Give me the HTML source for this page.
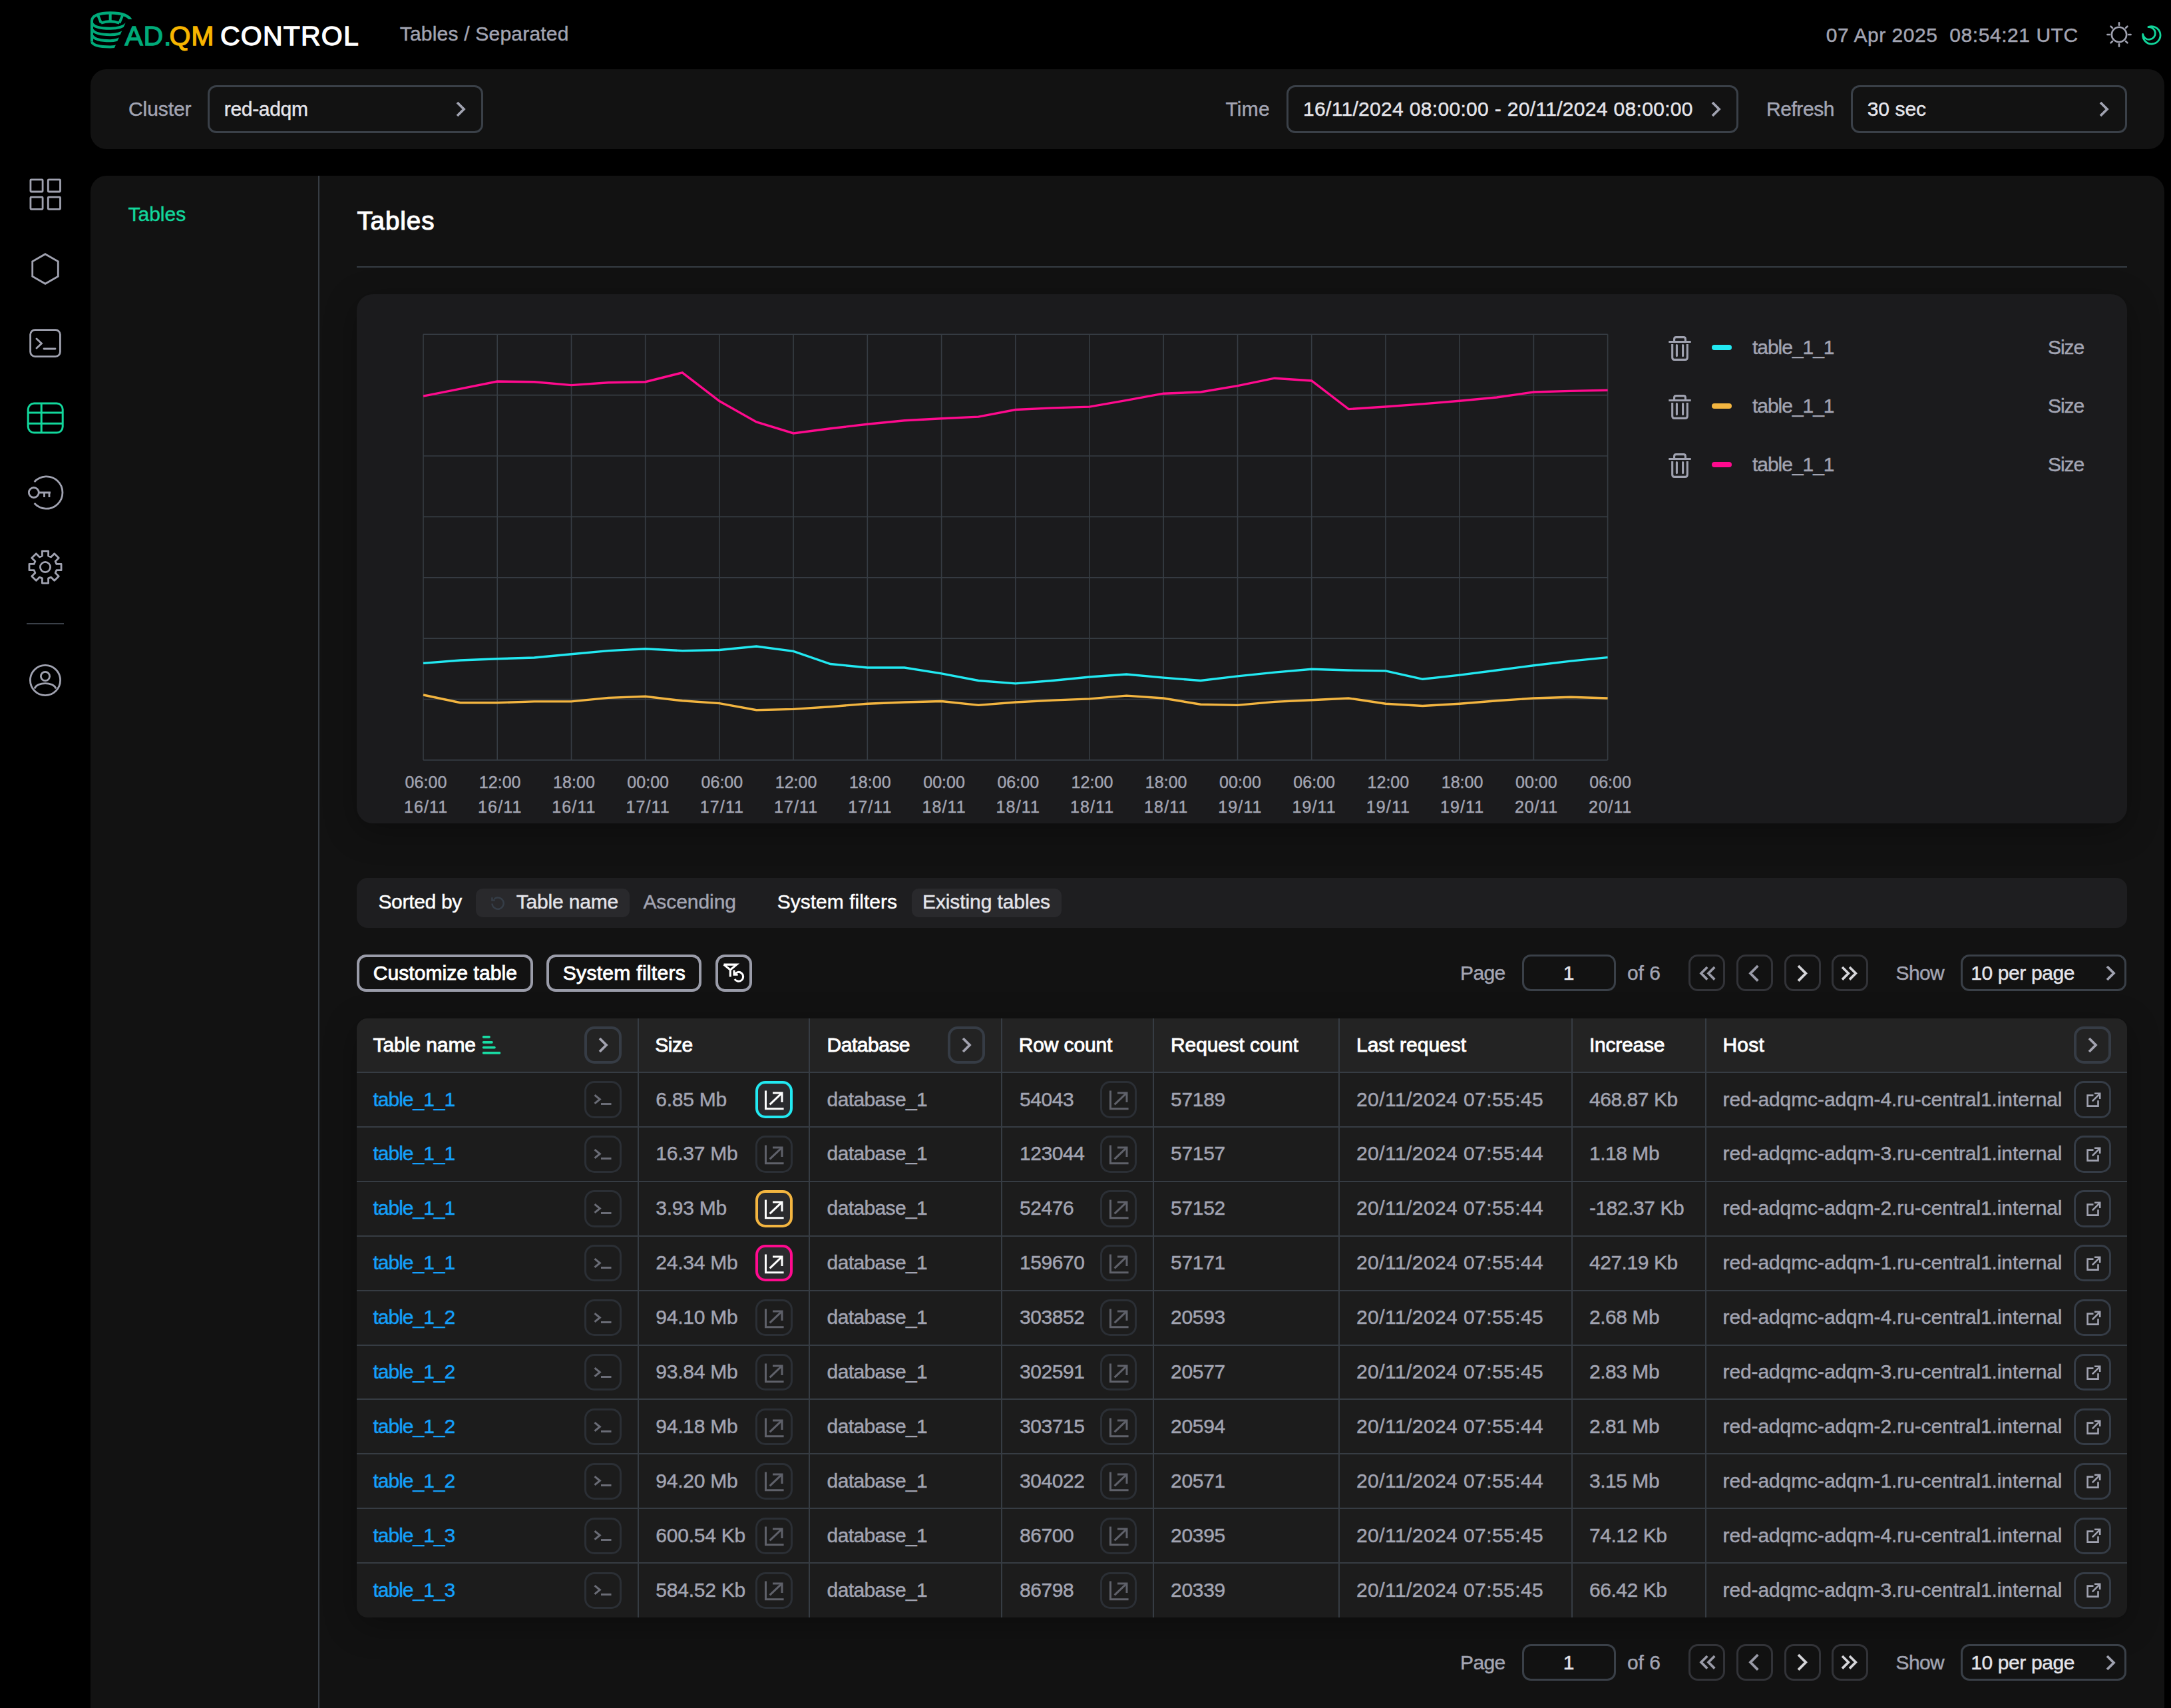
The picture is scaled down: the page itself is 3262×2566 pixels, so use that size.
<!DOCTYPE html>
<html><head><meta charset="utf-8"><title>ADQM Control - Tables</title>
<style>
html,body{margin:0;padding:0;background:#000000;}
body{width:3262px;height:2566px;position:relative;overflow:hidden;font-family:"Liberation Sans",sans-serif;}
.a{position:absolute;}
.t{position:absolute;white-space:nowrap;line-height:1;}
svg.a{overflow:visible;}
</style></head><body>
<svg class="a" style="left:130.0px;top:10.0px" width="80" height="70" viewBox="0 0 1952 1708"><defs><clipPath id="lgc"><polygon points="0,0 1952,0 1952,462 1486,462 1403,650 1065,1415 995,1575 995,1708 0,1708"/></clipPath></defs>
<g fill="none" stroke="#00ab7a" stroke-width="100" stroke-linecap="butt" clip-path="url(#lgc)">
<path d="M1640 520 C1560 320 1250 228 870 228 C470 228 195 330 195 520 L195 1290"/>
<path d="M425 330 L535 600 M1315 330 L1205 600 M870 230 L870 520"/>
<path d="M535 600 Q870 480 1205 600"/>
<path d="M195 600 Q280 795 870 800 Q1300 800 1500 600"/>
<path d="M215 850 Q320 1030 870 1030 Q1210 1030 1400 880"/>
<path d="M215 1070 Q320 1250 870 1250 Q1110 1250 1300 1130"/>
<path d="M195 1290 Q250 1470 870 1475 Q1010 1475 1200 1420"/>
</g></svg>
<div class="t" style="left:187.5px;top:33.8px;font-size:41px;color:#00ab7a;-webkit-text-stroke:0.45px #00ab7a;letter-spacing:0.72px;-webkit-text-stroke:1.3px #00ab7a;">AD.</div>
<div class="t" style="left:254.5px;top:33.8px;font-size:41px;color:#f7b500;-webkit-text-stroke:0.45px #f7b500;letter-spacing:0.98px;-webkit-text-stroke:1.3px #f7b500;">QM</div>
<div class="t" style="left:331.0px;top:33.8px;font-size:41px;color:#ffffff;-webkit-text-stroke:0.45px #ffffff;letter-spacing:1.22px;-webkit-text-stroke:1.3px #ffffff;">CONTROL</div>
<div class="t" style="left:600.7px;top:36.1px;font-size:30px;color:#a2a4b2;-webkit-text-stroke:0.45px #a2a4b2;letter-spacing:0.21px;">Tables / Separated</div>
<div class="t" style="left:2743.7px;top:37.6px;font-size:30px;color:#a2a4b2;-webkit-text-stroke:0.45px #a2a4b2;letter-spacing:0.55px;">07 Apr 2025 &nbsp;08:54:21 UTC</div>
<svg class="a" style="left:3164.0px;top:32.0px" width="40" height="40" viewBox="0 0 40 40"><g fill="none" stroke="#a0a2b0" stroke-width="2.6" stroke-linecap="round"><circle cx="20" cy="20" r="11.2"/><line x1="34.20" y1="20.00" x2="37.60" y2="20.00"/><line x1="30.04" y1="30.04" x2="32.45" y2="32.45"/><line x1="20.00" y1="34.20" x2="20.00" y2="37.60"/><line x1="9.96" y1="30.04" x2="7.55" y2="32.45"/><line x1="5.80" y1="20.00" x2="2.40" y2="20.00"/><line x1="9.96" y1="9.96" x2="7.55" y2="7.55"/><line x1="20.00" y1="5.80" x2="20.00" y2="2.40"/><line x1="30.04" y1="9.96" x2="32.45" y2="7.55"/></g></svg>
<svg class="a" style="left:3213.0px;top:34.0px" width="40" height="40" viewBox="0 0 40 40"><path fill="none" stroke="#12d79c" stroke-width="2.8" stroke-linejoin="round"
 d="M14.9 6.6 A13.2 13.2 0 1 1 6.7 17.5 A9.4 9.4 0 1 0 14.9 6.6 Z"/></svg>
<div class="a" style="left:136.0px;top:104.0px;width:3116.0px;height:120.0px;background:#121212;border-radius:24px;"></div>
<div class="t" style="left:193.0px;top:149.2px;font-size:30px;color:#a2a4b2;-webkit-text-stroke:0.45px #a2a4b2;letter-spacing:-0.08px;">Cluster</div>
<div class="a" style="left:312.0px;top:128.3px;width:414.4px;height:71.4px;border-radius:13px;border:3px solid #3a4048;box-sizing:border-box;"></div>
<div class="t" style="left:336.7px;top:149.2px;font-size:30px;color:#e4e4ea;-webkit-text-stroke:0.45px #e4e4ea;letter-spacing:-0.30px;">red-adqm</div>
<svg class="a" style="left:680.6px;top:148.0px" width="22" height="32" viewBox="0 0 22 32"><path d="M6.00 6.00 L16.00 16.00 L6.00 26.00" fill="none" stroke="#a0a2b0" stroke-width="3.8" stroke-linecap="butt" stroke-linejoin="miter"/></svg>
<div class="t" style="left:1841.4px;top:149.2px;font-size:30px;color:#a2a4b2;-webkit-text-stroke:0.45px #a2a4b2;letter-spacing:0.26px;">Time</div>
<div class="a" style="left:1933.0px;top:128.3px;width:679.0px;height:71.4px;border-radius:13px;border:3px solid #3a4048;box-sizing:border-box;"></div>
<div class="t" style="left:1958.0px;top:149.2px;font-size:30px;color:#e4e4ea;-webkit-text-stroke:0.45px #e4e4ea;letter-spacing:0.32px;">16/11/2024 08:00:00 - 20/11/2024 08:00:00</div>
<svg class="a" style="left:2567.0px;top:148.0px" width="22" height="32" viewBox="0 0 22 32"><path d="M6.00 6.00 L16.00 16.00 L6.00 26.00" fill="none" stroke="#a0a2b0" stroke-width="3.8" stroke-linecap="butt" stroke-linejoin="miter"/></svg>
<div class="t" style="left:2654.0px;top:149.2px;font-size:30px;color:#a2a4b2;-webkit-text-stroke:0.45px #a2a4b2;letter-spacing:-0.44px;">Refresh</div>
<div class="a" style="left:2781.0px;top:128.3px;width:414.7px;height:71.4px;border-radius:13px;border:3px solid #3a4048;box-sizing:border-box;"></div>
<div class="t" style="left:2805.7px;top:149.2px;font-size:30px;color:#e4e4ea;-webkit-text-stroke:0.45px #e4e4ea;">30 sec</div>
<svg class="a" style="left:3150.0px;top:148.0px" width="22" height="32" viewBox="0 0 22 32"><path d="M6.00 6.00 L16.00 16.00 L6.00 26.00" fill="none" stroke="#a0a2b0" stroke-width="3.8" stroke-linecap="butt" stroke-linejoin="miter"/></svg>
<svg class="a" style="left:40.0px;top:264.0px" width="56" height="56" viewBox="0 0 56 56"><g fill="none" stroke="#a0a2b0" stroke-width="2.8"><rect x="5.9" y="5.8" width="18.2" height="18.2" rx="1"/><rect x="32.3" y="5.8" width="18.2" height="18.2" rx="1"/><rect x="5.9" y="32.1" width="18.2" height="18.2" rx="1"/><rect x="32.3" y="32.1" width="18.2" height="18.2" rx="1"/></g></svg>
<svg class="a" style="left:40.0px;top:376.0px" width="56" height="56" viewBox="0 0 56 56"><polygon fill="none" stroke="#a0a2b0" stroke-width="2.8" points="28.00,5.70 47.31,16.85 47.31,39.15 28.00,50.30 8.69,39.15 8.69,16.85"/></svg>
<svg class="a" style="left:40.0px;top:487.0px" width="56" height="56" viewBox="0 0 56 56"><g fill="none" stroke="#a0a2b0" stroke-width="2.8" stroke-linecap="round"><rect x="5.6" y="8.6" width="44.8" height="40" rx="7"/><path d="M15 22 L22.5 29 L15 36" /><path d="M26 37 L43 37"/></g></svg>
<svg class="a" style="left:36.0px;top:600.0px" width="64" height="56" viewBox="0 0 64 56"><g fill="none" stroke="#12d79c" stroke-width="3"><rect x="6.2" y="6.1" width="52" height="44" rx="9"/><path d="M26.2 6.1 L26.2 50.1 M6.2 20 L58.2 20 M6.2 36.2 L58.2 36.2"/></g></svg>
<svg class="a" style="left:36.0px;top:708.0px" width="64" height="64" viewBox="0 0 64 64"><g fill="none" stroke="#a0a2b0" stroke-width="2.8"><path d="M15.6 16 A24.2 24.2 0 1 1 15.6 48"/><circle cx="14.8" cy="32" r="7.5"/><path d="M22.3 32 L40 32 M30.5 32 L30.5 39 M38 32 L38 39"/></g></svg>
<svg class="a" style="left:36.0px;top:820.0px" width="64" height="64" viewBox="0 0 64 64"><g fill="none" stroke="#a0a2b0" stroke-width="2.8" stroke-linejoin="round"><path d="M48.90 27.47 L56.05 27.33 L56.05 36.67 L48.90 36.53 L47.16 40.75 L52.31 45.70 L45.70 52.31 L40.75 47.16 L36.53 48.90 L36.67 56.05 L27.33 56.05 L27.47 48.90 L23.25 47.16 L18.30 52.31 L11.69 45.70 L16.84 40.75 L15.10 36.53 L7.95 36.67 L7.95 27.33 L15.10 27.47 L16.84 23.25 L11.69 18.30 L18.30 11.69 L23.25 16.84 L27.47 15.10 L27.33 7.95 L36.67 7.95 L36.53 15.10 L40.75 16.84 L45.70 11.69 L52.31 18.30 L47.16 23.25 Z"/><circle cx="32" cy="32" r="7.6"/></g></svg>
<div class="a" style="left:40.0px;top:936.0px;width:56.0px;height:2.0px;background:#3a4048;"></div>
<svg class="a" style="left:36.0px;top:990.0px" width="64" height="64" viewBox="0 0 64 64"><g fill="none" stroke="#a0a2b0" stroke-width="2.8" stroke-width="3"><circle cx="32" cy="32" r="22.6"/><circle cx="32" cy="26" r="6.6"/><path d="M15.8 44.5 C20 34 44 34 48.2 44.5"/></g></svg>
<div class="a" style="left:136.0px;top:264.0px;width:3116.0px;height:2336.0px;background:#121212;border-radius:24px;"></div>
<div class="t" style="left:192.4px;top:306.8px;font-size:30px;color:#12d79c;-webkit-text-stroke:0.45px #12d79c;letter-spacing:0.03px;">Tables</div>
<div class="a" style="left:477.7px;top:264.0px;width:2.0px;height:2302.0px;background:#363c43;"></div>
<div class="t" style="left:536.4px;top:313.2px;font-size:38.5px;color:#ffffff;-webkit-text-stroke:1.16px #ffffff;letter-spacing:0.94px;">Tables</div>
<div class="a" style="left:536.0px;top:400.0px;width:2660.0px;height:2.0px;background:#363c43;"></div>
<div class="a" style="left:536.0px;top:442.0px;width:2660.0px;height:795.0px;background:#1b1b1d;border-radius:24px;box-shadow:0 12px 50px rgba(0,0,0,0.3);"></div>
<svg class="a" style="left:0.0px;top:0.0px" width="3262" height="1300" viewBox="0 0 3262 1300"><path d="M636.0 502.2 L636.0 1141.9 M747.2 502.2 L747.2 1141.9 M858.5 502.2 L858.5 1141.9 M969.7 502.2 L969.7 1141.9 M1080.9 502.2 L1080.9 1141.9 M1192.1 502.2 L1192.1 1141.9 M1303.3 502.2 L1303.3 1141.9 M1414.6 502.2 L1414.6 1141.9 M1525.8 502.2 L1525.8 1141.9 M1637.0 502.2 L1637.0 1141.9 M1748.2 502.2 L1748.2 1141.9 M1859.5 502.2 L1859.5 1141.9 M1970.7 502.2 L1970.7 1141.9 M2081.9 502.2 L2081.9 1141.9 M2193.1 502.2 L2193.1 1141.9 M2304.4 502.2 L2304.4 1141.9 M2415.6 502.2 L2415.6 1141.9 M636 502.2 L2415.6 502.2 M636 593.6 L2415.6 593.6 M636 685.0 L2415.6 685.0 M636 776.4 L2415.6 776.4 M636 867.7 L2415.6 867.7 M636 959.1 L2415.6 959.1 M636 1050.5 L2415.6 1050.5 M636 1141.9 L2415.6 1141.9" stroke="#363c43" stroke-width="1.6" fill="none"/><polyline points="636.0,1044.0 691.6,1055.7 747.2,1055.7 802.8,1053.9 858.5,1053.9 914.1,1048.4 969.7,1046.2 1025.3,1052.8 1080.9,1056.6 1136.5,1066.7 1192.1,1065.4 1247.7,1061.7 1303.3,1057.2 1359.0,1055.0 1414.6,1053.5 1470.2,1059.4 1525.8,1055.0 1581.4,1052.1 1637.0,1049.9 1692.6,1045.1 1748.2,1049.0 1803.9,1058.3 1859.5,1059.4 1915.1,1054.4 1970.7,1051.7 2026.3,1049.0 2081.9,1057.2 2137.5,1060.5 2193.1,1057.2 2248.8,1052.8 2304.4,1049.0 2360.0,1047.3 2415.6,1049.0" fill="none" stroke="#f3b540" stroke-width="3.4" stroke-linejoin="miter"/><polyline points="636.0,996.4 691.6,992.0 747.2,989.8 802.8,988.0 858.5,982.7 914.1,977.6 969.7,974.8 1025.3,977.6 1080.9,976.5 1136.5,971.0 1192.1,978.3 1247.7,997.5 1303.3,1003.0 1359.0,1003.0 1414.6,1011.9 1470.2,1022.5 1525.8,1026.9 1581.4,1022.5 1637.0,1017.0 1692.6,1013.0 1748.2,1018.1 1803.9,1022.5 1859.5,1015.9 1915.1,1010.1 1970.7,1005.3 2026.3,1007.0 2081.9,1007.9 2137.5,1020.3 2193.1,1014.1 2248.8,1007.0 2304.4,999.7 2360.0,993.1 2415.6,987.6" fill="none" stroke="#22e9f2" stroke-width="3.4" stroke-linejoin="miter"/><polyline points="636.0,595.2 691.6,584.1 747.2,573.0 802.8,573.7 858.5,578.6 914.1,574.8 969.7,573.7 1025.3,559.8 1080.9,602.6 1136.5,633.9 1192.1,650.9 1247.7,643.8 1303.3,637.2 1359.0,631.7 1414.6,628.8 1470.2,626.1 1525.8,615.5 1581.4,612.9 1637.0,611.1 1692.6,601.4 1748.2,591.2 1803.9,589.0 1859.5,579.7 1915.1,568.2 1970.7,572.0 2026.3,614.6 2081.9,611.0 2137.5,606.9 2193.1,602.2 2248.8,597.0 2304.4,589.0 2360.0,587.4 2415.6,586.3" fill="none" stroke="#ff0a8e" stroke-width="3.4" stroke-linejoin="miter"/></svg>
<div class="t" style="left:608.6px;top:1163.3px;font-size:25px;color:#a2a4b2;-webkit-text-stroke:0.45px #a2a4b2;letter-spacing:0.04px;">06:00</div>
<div class="t" style="left:606.9px;top:1199.8px;font-size:25px;color:#a2a4b2;-webkit-text-stroke:0.45px #a2a4b2;letter-spacing:1.12px;">16/11</div>
<div class="t" style="left:719.8px;top:1163.3px;font-size:25px;color:#a2a4b2;-webkit-text-stroke:0.45px #a2a4b2;letter-spacing:0.04px;">12:00</div>
<div class="t" style="left:718.1px;top:1199.8px;font-size:25px;color:#a2a4b2;-webkit-text-stroke:0.45px #a2a4b2;letter-spacing:1.12px;">16/11</div>
<div class="t" style="left:831.1px;top:1163.3px;font-size:25px;color:#a2a4b2;-webkit-text-stroke:0.45px #a2a4b2;letter-spacing:0.04px;">18:00</div>
<div class="t" style="left:829.3px;top:1199.8px;font-size:25px;color:#a2a4b2;-webkit-text-stroke:0.45px #a2a4b2;letter-spacing:1.12px;">16/11</div>
<div class="t" style="left:942.3px;top:1163.3px;font-size:25px;color:#a2a4b2;-webkit-text-stroke:0.45px #a2a4b2;letter-spacing:0.04px;">00:00</div>
<div class="t" style="left:940.5px;top:1199.8px;font-size:25px;color:#a2a4b2;-webkit-text-stroke:0.45px #a2a4b2;letter-spacing:1.12px;">17/11</div>
<div class="t" style="left:1053.5px;top:1163.3px;font-size:25px;color:#a2a4b2;-webkit-text-stroke:0.45px #a2a4b2;letter-spacing:0.04px;">06:00</div>
<div class="t" style="left:1051.8px;top:1199.8px;font-size:25px;color:#a2a4b2;-webkit-text-stroke:0.45px #a2a4b2;letter-spacing:1.12px;">17/11</div>
<div class="t" style="left:1164.7px;top:1163.3px;font-size:25px;color:#a2a4b2;-webkit-text-stroke:0.45px #a2a4b2;letter-spacing:0.04px;">12:00</div>
<div class="t" style="left:1163.0px;top:1199.8px;font-size:25px;color:#a2a4b2;-webkit-text-stroke:0.45px #a2a4b2;letter-spacing:1.12px;">17/11</div>
<div class="t" style="left:1275.9px;top:1163.3px;font-size:25px;color:#a2a4b2;-webkit-text-stroke:0.45px #a2a4b2;letter-spacing:0.04px;">18:00</div>
<div class="t" style="left:1274.2px;top:1199.8px;font-size:25px;color:#a2a4b2;-webkit-text-stroke:0.45px #a2a4b2;letter-spacing:1.12px;">17/11</div>
<div class="t" style="left:1387.2px;top:1163.3px;font-size:25px;color:#a2a4b2;-webkit-text-stroke:0.45px #a2a4b2;letter-spacing:0.04px;">00:00</div>
<div class="t" style="left:1385.4px;top:1199.8px;font-size:25px;color:#a2a4b2;-webkit-text-stroke:0.45px #a2a4b2;letter-spacing:1.12px;">18/11</div>
<div class="t" style="left:1498.4px;top:1163.3px;font-size:25px;color:#a2a4b2;-webkit-text-stroke:0.45px #a2a4b2;letter-spacing:0.04px;">06:00</div>
<div class="t" style="left:1496.6px;top:1199.8px;font-size:25px;color:#a2a4b2;-webkit-text-stroke:0.45px #a2a4b2;letter-spacing:1.12px;">18/11</div>
<div class="t" style="left:1609.6px;top:1163.3px;font-size:25px;color:#a2a4b2;-webkit-text-stroke:0.45px #a2a4b2;letter-spacing:0.04px;">12:00</div>
<div class="t" style="left:1607.9px;top:1199.8px;font-size:25px;color:#a2a4b2;-webkit-text-stroke:0.45px #a2a4b2;letter-spacing:1.12px;">18/11</div>
<div class="t" style="left:1720.8px;top:1163.3px;font-size:25px;color:#a2a4b2;-webkit-text-stroke:0.45px #a2a4b2;letter-spacing:0.04px;">18:00</div>
<div class="t" style="left:1719.1px;top:1199.8px;font-size:25px;color:#a2a4b2;-webkit-text-stroke:0.45px #a2a4b2;letter-spacing:1.12px;">18/11</div>
<div class="t" style="left:1832.1px;top:1163.3px;font-size:25px;color:#a2a4b2;-webkit-text-stroke:0.45px #a2a4b2;letter-spacing:0.04px;">00:00</div>
<div class="t" style="left:1830.3px;top:1199.8px;font-size:25px;color:#a2a4b2;-webkit-text-stroke:0.45px #a2a4b2;letter-spacing:1.12px;">19/11</div>
<div class="t" style="left:1943.3px;top:1163.3px;font-size:25px;color:#a2a4b2;-webkit-text-stroke:0.45px #a2a4b2;letter-spacing:0.04px;">06:00</div>
<div class="t" style="left:1941.5px;top:1199.8px;font-size:25px;color:#a2a4b2;-webkit-text-stroke:0.45px #a2a4b2;letter-spacing:1.12px;">19/11</div>
<div class="t" style="left:2054.5px;top:1163.3px;font-size:25px;color:#a2a4b2;-webkit-text-stroke:0.45px #a2a4b2;letter-spacing:0.04px;">12:00</div>
<div class="t" style="left:2052.8px;top:1199.8px;font-size:25px;color:#a2a4b2;-webkit-text-stroke:0.45px #a2a4b2;letter-spacing:1.12px;">19/11</div>
<div class="t" style="left:2165.7px;top:1163.3px;font-size:25px;color:#a2a4b2;-webkit-text-stroke:0.45px #a2a4b2;letter-spacing:0.04px;">18:00</div>
<div class="t" style="left:2164.0px;top:1199.8px;font-size:25px;color:#a2a4b2;-webkit-text-stroke:0.45px #a2a4b2;letter-spacing:1.12px;">19/11</div>
<div class="t" style="left:2277.0px;top:1163.3px;font-size:25px;color:#a2a4b2;-webkit-text-stroke:0.45px #a2a4b2;letter-spacing:0.04px;">00:00</div>
<div class="t" style="left:2275.9px;top:1199.8px;font-size:25px;color:#a2a4b2;-webkit-text-stroke:0.45px #a2a4b2;letter-spacing:0.86px;">20/11</div>
<div class="t" style="left:2388.2px;top:1163.3px;font-size:25px;color:#a2a4b2;-webkit-text-stroke:0.45px #a2a4b2;letter-spacing:0.04px;">06:00</div>
<div class="t" style="left:2387.1px;top:1199.8px;font-size:25px;color:#a2a4b2;-webkit-text-stroke:0.45px #a2a4b2;letter-spacing:0.86px;">20/11</div>
<svg class="a" style="left:2500.0px;top:498.0px" width="50" height="50" viewBox="0 0 50 50"><g fill="none" stroke="#a0a2b0" stroke-width="3.1" stroke-linecap="butt"><path d="M7.3 15.5 L40.7 15.5"/><path d="M15.6 15 L15.6 11.4 Q15.6 8.6 18.4 8.6 L29.6 8.6 Q32.4 8.6 32.4 11.4 L32.4 15"/><path d="M12.7 19 L12.7 39 Q12.7 42.4 16 42.4 L32 42.4 Q35.3 42.4 35.3 39 L35.3 19"/><path d="M19.4 20.5 L19.4 36.6 M28.6 20.5 L28.6 36.6" stroke-linecap="round"/></g></svg>
<div class="a" style="left:2572.0px;top:518.0px;width:30.0px;height:8.0px;background:#22e9f2;border-radius:4px;"></div>
<div class="t" style="left:2633.0px;top:507.4px;font-size:30px;color:#a2a4b2;-webkit-text-stroke:0.45px #a2a4b2;letter-spacing:-1.03px;">table_1_1</div>
<div class="t" style="left:3077.0px;top:507.4px;font-size:30px;color:#a2a4b2;-webkit-text-stroke:0.45px #a2a4b2;letter-spacing:-1.09px;">Size</div>
<svg class="a" style="left:2500.0px;top:585.6px" width="50" height="50" viewBox="0 0 50 50"><g fill="none" stroke="#a0a2b0" stroke-width="3.1" stroke-linecap="butt"><path d="M7.3 15.5 L40.7 15.5"/><path d="M15.6 15 L15.6 11.4 Q15.6 8.6 18.4 8.6 L29.6 8.6 Q32.4 8.6 32.4 11.4 L32.4 15"/><path d="M12.7 19 L12.7 39 Q12.7 42.4 16 42.4 L32 42.4 Q35.3 42.4 35.3 39 L35.3 19"/><path d="M19.4 20.5 L19.4 36.6 M28.6 20.5 L28.6 36.6" stroke-linecap="round"/></g></svg>
<div class="a" style="left:2572.0px;top:605.6px;width:30.0px;height:8.0px;background:#f3b540;border-radius:4px;"></div>
<div class="t" style="left:2633.0px;top:595.0px;font-size:30px;color:#a2a4b2;-webkit-text-stroke:0.45px #a2a4b2;letter-spacing:-1.03px;">table_1_1</div>
<div class="t" style="left:3077.0px;top:595.0px;font-size:30px;color:#a2a4b2;-webkit-text-stroke:0.45px #a2a4b2;letter-spacing:-1.09px;">Size</div>
<svg class="a" style="left:2500.0px;top:674.0px" width="50" height="50" viewBox="0 0 50 50"><g fill="none" stroke="#a0a2b0" stroke-width="3.1" stroke-linecap="butt"><path d="M7.3 15.5 L40.7 15.5"/><path d="M15.6 15 L15.6 11.4 Q15.6 8.6 18.4 8.6 L29.6 8.6 Q32.4 8.6 32.4 11.4 L32.4 15"/><path d="M12.7 19 L12.7 39 Q12.7 42.4 16 42.4 L32 42.4 Q35.3 42.4 35.3 39 L35.3 19"/><path d="M19.4 20.5 L19.4 36.6 M28.6 20.5 L28.6 36.6" stroke-linecap="round"/></g></svg>
<div class="a" style="left:2572.0px;top:694.0px;width:30.0px;height:8.0px;background:#ff0a8e;border-radius:4px;"></div>
<div class="t" style="left:2633.0px;top:683.4px;font-size:30px;color:#a2a4b2;-webkit-text-stroke:0.45px #a2a4b2;letter-spacing:-1.03px;">table_1_1</div>
<div class="t" style="left:3077.0px;top:683.4px;font-size:30px;color:#a2a4b2;-webkit-text-stroke:0.45px #a2a4b2;letter-spacing:-1.09px;">Size</div>
<div class="a" style="left:536.0px;top:1319.0px;width:2660.0px;height:75.0px;background:#1e1e20;border-radius:16px;"></div>
<div class="t" style="left:568.4px;top:1340.4px;font-size:30px;color:#ffffff;-webkit-text-stroke:0.45px #ffffff;letter-spacing:-0.31px;">Sorted by</div>
<div class="a" style="left:715.4px;top:1334.5px;width:230.2px;height:43.5px;background:#29292c;border-radius:10px;"></div>
<svg class="a" style="left:733.0px;top:1341.0px" width="30" height="30" viewBox="0 0 30 30"><g fill="none" stroke="#353d47" stroke-width="2.5"><path d="M6.5 16.5 A8.6 8.6 0 1 0 9.6 9.5"/><path d="M6.4 7.2 L6.4 11.6 L10.8 11.6"/></g></svg>
<div class="t" style="left:775.7px;top:1340.4px;font-size:30px;color:#e4e4ea;-webkit-text-stroke:0.45px #e4e4ea;letter-spacing:-0.18px;">Table name</div>
<div class="t" style="left:966.4px;top:1340.4px;font-size:30px;color:#a2a4b2;-webkit-text-stroke:0.45px #a2a4b2;letter-spacing:-0.06px;">Ascending</div>
<div class="t" style="left:1167.7px;top:1340.4px;font-size:30px;color:#ffffff;-webkit-text-stroke:0.45px #ffffff;letter-spacing:0.02px;">System filters</div>
<div class="a" style="left:1369.5px;top:1334.5px;width:225.2px;height:43.5px;background:#29292c;border-radius:10px;"></div>
<div class="t" style="left:1386.0px;top:1340.4px;font-size:30px;color:#e4e4ea;-webkit-text-stroke:0.45px #e4e4ea;letter-spacing:-0.10px;">Existing tables</div>
<div class="a" style="left:536.2px;top:1434.2px;width:264.5px;height:55.4px;border-radius:14px;border:4px solid #9a9ca9;box-sizing:border-box;"></div>
<div class="t" style="left:560.7px;top:1446.5px;font-size:30px;color:#ffffff;-webkit-text-stroke:0.90px #ffffff;letter-spacing:0.08px;">Customize table</div>
<div class="a" style="left:821.3px;top:1434.2px;width:233.2px;height:55.4px;border-radius:14px;border:4px solid #9a9ca9;box-sizing:border-box;"></div>
<div class="t" style="left:845.8px;top:1446.5px;font-size:30px;color:#ffffff;-webkit-text-stroke:0.90px #ffffff;letter-spacing:0.30px;">System filters</div>
<div class="a" style="left:1075.0px;top:1434.2px;width:55.3px;height:55.4px;border-radius:14px;border:4px solid #9a9ca9;box-sizing:border-box;"></div>
<svg class="a" style="left:1075.0px;top:1434.0px" width="56" height="56" viewBox="0 0 56 56"><g fill="none" stroke="#ffffff" stroke-width="3.1"><path d="M12.5 15.1 L31.8 15.1 L22.3 23 L22.3 33.6 M22.3 23 L12.5 15.1"/><path d="M29 29.5 A6.9 6.9 0 1 1 28.9 37"/><path d="M28 23.4 L28 30.2 L33.6 30.2"/></g></svg>
<div class="t" style="left:2194.0px;top:1446.6px;font-size:30px;color:#a2a4b2;-webkit-text-stroke:0.45px #a2a4b2;letter-spacing:-0.59px;">Page</div>
<div class="a" style="left:2286.5px;top:1434.4px;width:141.2px;height:54.8px;border-radius:13px;border:3px solid #3a4048;box-sizing:border-box;"></div>
<div class="t" style="left:2348.7px;top:1446.6px;font-size:30px;color:#e4e4ea;-webkit-text-stroke:0.45px #e4e4ea;">1</div>
<div class="t" style="left:2444.9px;top:1446.6px;font-size:30px;color:#a2a4b2;-webkit-text-stroke:0.45px #a2a4b2;letter-spacing:-0.03px;">of 6</div>
<div class="a" style="left:2536.6px;top:1434.4px;width:55.0px;height:54.8px;border-radius:14px;border:3px solid #323338;box-sizing:border-box;"></div>
<svg class="a" style="left:2550.0px;top:1446.5px" width="21.3" height="30.6" viewBox="0 0 21.3 30.6"><path d="M15.30 6.00 L6.00 15.30 L15.30 24.60" fill="none" stroke="#9a9ba8" stroke-width="3.7" stroke-linecap="butt" stroke-linejoin="miter"/></svg>
<svg class="a" style="left:2560.5px;top:1446.5px" width="21.3" height="30.6" viewBox="0 0 21.3 30.6"><path d="M15.30 6.00 L6.00 15.30 L15.30 24.60" fill="none" stroke="#9a9ba8" stroke-width="3.7" stroke-linecap="butt" stroke-linejoin="miter"/></svg>
<div class="a" style="left:2608.6px;top:1434.4px;width:55.0px;height:54.8px;border-radius:14px;border:3px solid #323338;box-sizing:border-box;"></div>
<svg class="a" style="left:2624.0px;top:1444.5px" width="23.3" height="34.6" viewBox="0 0 23.3 34.6"><path d="M17.30 6.00 L6.00 17.30 L17.30 28.60" fill="none" stroke="#9a9ba8" stroke-width="3.8" stroke-linecap="butt" stroke-linejoin="miter"/></svg>
<div class="a" style="left:2680.5px;top:1434.4px;width:55.0px;height:54.8px;border-radius:14px;border:3px solid #323338;box-sizing:border-box;"></div>
<svg class="a" style="left:2696.2px;top:1444.5px" width="23.3" height="34.6" viewBox="0 0 23.3 34.6"><path d="M6.00 6.00 L17.30 17.30 L6.00 28.60" fill="none" stroke="#d6d6da" stroke-width="3.8" stroke-linecap="butt" stroke-linejoin="miter"/></svg>
<div class="a" style="left:2752.4px;top:1434.4px;width:55.0px;height:54.8px;border-radius:14px;border:3px solid #323338;box-sizing:border-box;"></div>
<svg class="a" style="left:2761.7px;top:1446.5px" width="21.3" height="30.6" viewBox="0 0 21.3 30.6"><path d="M6.00 6.00 L15.30 15.30 L6.00 24.60" fill="none" stroke="#d6d6da" stroke-width="3.7" stroke-linecap="butt" stroke-linejoin="miter"/></svg>
<svg class="a" style="left:2772.7px;top:1446.5px" width="21.3" height="30.6" viewBox="0 0 21.3 30.6"><path d="M6.00 6.00 L15.30 15.30 L6.00 24.60" fill="none" stroke="#d6d6da" stroke-width="3.7" stroke-linecap="butt" stroke-linejoin="miter"/></svg>
<div class="t" style="left:2848.6px;top:1446.6px;font-size:30px;color:#a2a4b2;-webkit-text-stroke:0.45px #a2a4b2;letter-spacing:-0.69px;">Show</div>
<div class="a" style="left:2946.2px;top:1434.4px;width:249.3px;height:54.8px;border-radius:13px;border:3px solid #3a4048;box-sizing:border-box;"></div>
<div class="t" style="left:2961.2px;top:1446.6px;font-size:30px;color:#e4e4ea;-webkit-text-stroke:0.45px #e4e4ea;letter-spacing:-0.38px;">10 per page</div>
<svg class="a" style="left:3160.0px;top:1445.8px" width="22" height="32" viewBox="0 0 22 32"><path d="M6.00 6.00 L16.00 16.00 L6.00 26.00" fill="none" stroke="#a0a2b0" stroke-width="3.8" stroke-linecap="butt" stroke-linejoin="miter"/></svg>
<div class="a" style="left:536px;top:1530px;width:2660px;height:900.0px;background:#1c1c1c;border-radius:16px;overflow:hidden;box-shadow:0 12px 50px rgba(0,0,0,0.3)"><div class="a" style="left:0;top:0;width:100%;height:81px;background:#232323"></div></div>
<div class="a" style="left:957.8px;top:1530.0px;width:2.0px;height:900.0px;background:#363c43;"></div>
<div class="a" style="left:1214.9px;top:1530.0px;width:2.0px;height:900.0px;background:#363c43;"></div>
<div class="a" style="left:1503.9px;top:1530.0px;width:2.0px;height:900.0px;background:#363c43;"></div>
<div class="a" style="left:1731.8px;top:1530.0px;width:2.0px;height:900.0px;background:#363c43;"></div>
<div class="a" style="left:2010.6px;top:1530.0px;width:2.0px;height:900.0px;background:#363c43;"></div>
<div class="a" style="left:2361.1px;top:1530.0px;width:2.0px;height:900.0px;background:#363c43;"></div>
<div class="a" style="left:2561.8px;top:1530.0px;width:2.0px;height:900.0px;background:#363c43;"></div>
<div class="a" style="left:536.0px;top:1610.0px;width:2660.0px;height:2.0px;background:#363c43;"></div>
<div class="a" style="left:536.0px;top:1691.9px;width:2660.0px;height:2.0px;background:#363c43;"></div>
<div class="a" style="left:536.0px;top:1773.8px;width:2660.0px;height:2.0px;background:#363c43;"></div>
<div class="a" style="left:536.0px;top:1855.7px;width:2660.0px;height:2.0px;background:#363c43;"></div>
<div class="a" style="left:536.0px;top:1937.6px;width:2660.0px;height:2.0px;background:#363c43;"></div>
<div class="a" style="left:536.0px;top:2019.5px;width:2660.0px;height:2.0px;background:#363c43;"></div>
<div class="a" style="left:536.0px;top:2101.4px;width:2660.0px;height:2.0px;background:#363c43;"></div>
<div class="a" style="left:536.0px;top:2183.3px;width:2660.0px;height:2.0px;background:#363c43;"></div>
<div class="a" style="left:536.0px;top:2265.2px;width:2660.0px;height:2.0px;background:#363c43;"></div>
<div class="a" style="left:536.0px;top:2347.1px;width:2660.0px;height:2.0px;background:#363c43;"></div>
<div class="t" style="left:560.5px;top:1554.9px;font-size:30px;color:#ffffff;-webkit-text-stroke:0.90px #ffffff;letter-spacing:-0.06px;">Table name</div>
<svg class="a" style="left:715.0px;top:1545.0px" width="50" height="50" viewBox="0 0 50 50"><g stroke="#19dca4" stroke-width="3.6" stroke-linecap="round"><path d="M11.5 12.9 L20 12.9 M11.5 20.9 L24 20.9 M11.5 28.8 L28 28.8 M11.5 36.9 L35.5 36.9"/></g></svg>
<div class="t" style="left:984.3px;top:1554.9px;font-size:30px;color:#ffffff;-webkit-text-stroke:0.90px #ffffff;letter-spacing:-0.49px;">Size</div>
<div class="t" style="left:1242.6px;top:1554.9px;font-size:30px;color:#ffffff;-webkit-text-stroke:0.90px #ffffff;letter-spacing:-0.50px;">Database</div>
<div class="t" style="left:1530.8px;top:1554.9px;font-size:30px;color:#ffffff;-webkit-text-stroke:0.90px #ffffff;letter-spacing:-0.14px;">Row count</div>
<div class="t" style="left:1759.1px;top:1554.9px;font-size:30px;color:#ffffff;-webkit-text-stroke:0.90px #ffffff;letter-spacing:-0.15px;">Request count</div>
<div class="t" style="left:2038.0px;top:1554.9px;font-size:30px;color:#ffffff;-webkit-text-stroke:0.90px #ffffff;">Last request</div>
<div class="t" style="left:2387.9px;top:1554.9px;font-size:30px;color:#ffffff;-webkit-text-stroke:0.90px #ffffff;letter-spacing:-0.20px;">Increase</div>
<div class="t" style="left:2588.4px;top:1554.9px;font-size:30px;color:#ffffff;-webkit-text-stroke:0.90px #ffffff;letter-spacing:0.25px;">Host</div>
<div class="a" style="left:878.2px;top:1542.3px;width:55.5px;height:55.4px;border-radius:15px;border:4px solid #363c45;box-sizing:border-box;"></div>
<svg class="a" style="left:895.2px;top:1554.0px" width="22" height="32" viewBox="0 0 22 32"><path d="M6.00 6.00 L16.00 16.00 L6.00 26.00" fill="none" stroke="#a3a3b0" stroke-width="3.8" stroke-linecap="butt" stroke-linejoin="miter"/></svg>
<div class="a" style="left:1424.4px;top:1542.3px;width:55.5px;height:55.4px;border-radius:15px;border:4px solid #363c45;box-sizing:border-box;"></div>
<svg class="a" style="left:1441.4px;top:1554.0px" width="22" height="32" viewBox="0 0 22 32"><path d="M6.00 6.00 L16.00 16.00 L6.00 26.00" fill="none" stroke="#a3a3b0" stroke-width="3.8" stroke-linecap="butt" stroke-linejoin="miter"/></svg>
<div class="a" style="left:3116.2px;top:1542.3px;width:55.5px;height:55.4px;border-radius:15px;border:4px solid #363c45;box-sizing:border-box;"></div>
<svg class="a" style="left:3133.2px;top:1554.0px" width="22" height="32" viewBox="0 0 22 32"><path d="M6.00 6.00 L16.00 16.00 L6.00 26.00" fill="none" stroke="#a3a3b0" stroke-width="3.8" stroke-linecap="butt" stroke-linejoin="miter"/></svg>
<div class="t" style="left:560.5px;top:1636.5px;font-size:30px;color:#14a0fa;-webkit-text-stroke:0.45px #14a0fa;letter-spacing:-1.01px;">table_1_1</div>
<div class="a" style="left:878.2px;top:1624.4px;width:55.5px;height:55.4px;border-radius:15px;border:3px solid #2b2f35;box-sizing:border-box;"></div>
<svg class="a" style="left:878.2px;top:1632.1px" width="56" height="40" viewBox="0 0 56 40"><g fill="none" stroke="#6a6c76" stroke-width="3"><path d="M15.5 13.2 L23.3 19.5 L15.5 25.8"/><path d="M25 26.5 L40.5 26.5"/></g></svg>
<div class="t" style="left:985.3px;top:1636.5px;font-size:30px;color:#a2a4b2;-webkit-text-stroke:0.45px #a2a4b2;letter-spacing:-0.25px;">6.85 Mb</div>
<div class="a" style="left:1135.2px;top:1624.4px;width:55.5px;height:55.4px;background:#2a2a2d;border-radius:15px;border:4px solid #22e9f2;box-sizing:border-box;"></div>
<svg class="a" style="left:1135.2px;top:1624.1px" width="56" height="56" viewBox="0 0 56 56"><g fill="none" stroke="#ffffff" stroke-width="3"><path d="M15.5 14.5 L15.5 41.7 L42.6 41.7"/><path d="M21.6 35.4 L40 17.9"/><path d="M26 17.9 L40 17.9 L40 32"/></g></svg>
<div class="t" style="left:1242.6px;top:1636.5px;font-size:30px;color:#a2a4b2;-webkit-text-stroke:0.45px #a2a4b2;letter-spacing:-0.63px;">database_1</div>
<div class="t" style="left:1532.0px;top:1636.5px;font-size:30px;color:#a2a4b2;-webkit-text-stroke:0.45px #a2a4b2;letter-spacing:-0.45px;">54043</div>
<div class="a" style="left:1652.5px;top:1624.4px;width:55.5px;height:55.4px;border-radius:15px;border:3px solid #2b2f35;box-sizing:border-box;"></div>
<svg class="a" style="left:1652.5px;top:1624.1px" width="56" height="56" viewBox="0 0 56 56"><g fill="none" stroke="#5f616a" stroke-width="3"><path d="M15.5 14.5 L15.5 41.7 L42.6 41.7"/><path d="M21.6 35.4 L40 17.9"/><path d="M26 17.9 L40 17.9 L40 32"/></g></svg>
<div class="t" style="left:1759.0px;top:1636.5px;font-size:30px;color:#a2a4b2;-webkit-text-stroke:0.45px #a2a4b2;letter-spacing:-0.28px;">57189</div>
<div class="t" style="left:2038.0px;top:1636.5px;font-size:30px;color:#a2a4b2;-webkit-text-stroke:0.45px #a2a4b2;letter-spacing:0.43px;">20/11/2024 07:55:45</div>
<div class="t" style="left:2387.9px;top:1636.5px;font-size:30px;color:#a2a4b2;-webkit-text-stroke:0.45px #a2a4b2;letter-spacing:-0.44px;">468.87 Kb</div>
<div class="t" style="left:2588.5px;top:1636.5px;font-size:30px;color:#a2a4b2;-webkit-text-stroke:0.45px #a2a4b2;letter-spacing:-0.10px;">red-adqmc-adqm-4.ru-central1.internal</div>
<div class="a" style="left:3116.2px;top:1624.4px;width:55.5px;height:55.4px;border-radius:15px;border:3px solid #353c46;box-sizing:border-box;"></div>
<svg class="a" style="left:3116.2px;top:1624.1px" width="56" height="56" viewBox="0 0 56 56"><g fill="none" stroke="#a0a2b0" stroke-width="2.6"><path d="M29.5 21.6 L20.6 21.6 L20.6 37.6 L36.5 37.6 L36.5 29.2"/><path d="M27.8 30.3 L38.8 19.3"/><path d="M31 18.8 L39.2 18.8 L39.2 27"/></g></svg>
<div class="t" style="left:560.5px;top:1718.4px;font-size:30px;color:#14a0fa;-webkit-text-stroke:0.45px #14a0fa;letter-spacing:-1.01px;">table_1_1</div>
<div class="a" style="left:878.2px;top:1706.3px;width:55.5px;height:55.4px;border-radius:15px;border:3px solid #2b2f35;box-sizing:border-box;"></div>
<svg class="a" style="left:878.2px;top:1714.0px" width="56" height="40" viewBox="0 0 56 40"><g fill="none" stroke="#6a6c76" stroke-width="3"><path d="M15.5 13.2 L23.3 19.5 L15.5 25.8"/><path d="M25 26.5 L40.5 26.5"/></g></svg>
<div class="t" style="left:985.3px;top:1718.4px;font-size:30px;color:#a2a4b2;-webkit-text-stroke:0.45px #a2a4b2;letter-spacing:-0.25px;">16.37 Mb</div>
<div class="a" style="left:1135.2px;top:1706.3px;width:55.5px;height:55.4px;border-radius:15px;border:3px solid #2b2f35;box-sizing:border-box;"></div>
<svg class="a" style="left:1135.2px;top:1706.0px" width="56" height="56" viewBox="0 0 56 56"><g fill="none" stroke="#5f616a" stroke-width="3"><path d="M15.5 14.5 L15.5 41.7 L42.6 41.7"/><path d="M21.6 35.4 L40 17.9"/><path d="M26 17.9 L40 17.9 L40 32"/></g></svg>
<div class="t" style="left:1242.6px;top:1718.4px;font-size:30px;color:#a2a4b2;-webkit-text-stroke:0.45px #a2a4b2;letter-spacing:-0.63px;">database_1</div>
<div class="t" style="left:1532.0px;top:1718.4px;font-size:30px;color:#a2a4b2;-webkit-text-stroke:0.45px #a2a4b2;letter-spacing:-0.45px;">123044</div>
<div class="a" style="left:1652.5px;top:1706.3px;width:55.5px;height:55.4px;border-radius:15px;border:3px solid #2b2f35;box-sizing:border-box;"></div>
<svg class="a" style="left:1652.5px;top:1706.0px" width="56" height="56" viewBox="0 0 56 56"><g fill="none" stroke="#5f616a" stroke-width="3"><path d="M15.5 14.5 L15.5 41.7 L42.6 41.7"/><path d="M21.6 35.4 L40 17.9"/><path d="M26 17.9 L40 17.9 L40 32"/></g></svg>
<div class="t" style="left:1759.0px;top:1718.4px;font-size:30px;color:#a2a4b2;-webkit-text-stroke:0.45px #a2a4b2;letter-spacing:-0.28px;">57157</div>
<div class="t" style="left:2038.0px;top:1718.4px;font-size:30px;color:#a2a4b2;-webkit-text-stroke:0.45px #a2a4b2;letter-spacing:0.43px;">20/11/2024 07:55:44</div>
<div class="t" style="left:2387.9px;top:1718.4px;font-size:30px;color:#a2a4b2;-webkit-text-stroke:0.45px #a2a4b2;letter-spacing:-0.45px;">1.18 Mb</div>
<div class="t" style="left:2588.5px;top:1718.4px;font-size:30px;color:#a2a4b2;-webkit-text-stroke:0.45px #a2a4b2;letter-spacing:-0.10px;">red-adqmc-adqm-3.ru-central1.internal</div>
<div class="a" style="left:3116.2px;top:1706.3px;width:55.5px;height:55.4px;border-radius:15px;border:3px solid #353c46;box-sizing:border-box;"></div>
<svg class="a" style="left:3116.2px;top:1706.0px" width="56" height="56" viewBox="0 0 56 56"><g fill="none" stroke="#a0a2b0" stroke-width="2.6"><path d="M29.5 21.6 L20.6 21.6 L20.6 37.6 L36.5 37.6 L36.5 29.2"/><path d="M27.8 30.3 L38.8 19.3"/><path d="M31 18.8 L39.2 18.8 L39.2 27"/></g></svg>
<div class="t" style="left:560.5px;top:1800.3px;font-size:30px;color:#14a0fa;-webkit-text-stroke:0.45px #14a0fa;letter-spacing:-1.01px;">table_1_1</div>
<div class="a" style="left:878.2px;top:1788.2px;width:55.5px;height:55.4px;border-radius:15px;border:3px solid #2b2f35;box-sizing:border-box;"></div>
<svg class="a" style="left:878.2px;top:1795.9px" width="56" height="40" viewBox="0 0 56 40"><g fill="none" stroke="#6a6c76" stroke-width="3"><path d="M15.5 13.2 L23.3 19.5 L15.5 25.8"/><path d="M25 26.5 L40.5 26.5"/></g></svg>
<div class="t" style="left:985.3px;top:1800.3px;font-size:30px;color:#a2a4b2;-webkit-text-stroke:0.45px #a2a4b2;letter-spacing:-0.25px;">3.93 Mb</div>
<div class="a" style="left:1135.2px;top:1788.2px;width:55.5px;height:55.4px;background:#2a2a2d;border-radius:15px;border:4px solid #f3b540;box-sizing:border-box;"></div>
<svg class="a" style="left:1135.2px;top:1787.9px" width="56" height="56" viewBox="0 0 56 56"><g fill="none" stroke="#ffffff" stroke-width="3"><path d="M15.5 14.5 L15.5 41.7 L42.6 41.7"/><path d="M21.6 35.4 L40 17.9"/><path d="M26 17.9 L40 17.9 L40 32"/></g></svg>
<div class="t" style="left:1242.6px;top:1800.3px;font-size:30px;color:#a2a4b2;-webkit-text-stroke:0.45px #a2a4b2;letter-spacing:-0.63px;">database_1</div>
<div class="t" style="left:1532.0px;top:1800.3px;font-size:30px;color:#a2a4b2;-webkit-text-stroke:0.45px #a2a4b2;letter-spacing:-0.45px;">52476</div>
<div class="a" style="left:1652.5px;top:1788.2px;width:55.5px;height:55.4px;border-radius:15px;border:3px solid #2b2f35;box-sizing:border-box;"></div>
<svg class="a" style="left:1652.5px;top:1787.9px" width="56" height="56" viewBox="0 0 56 56"><g fill="none" stroke="#5f616a" stroke-width="3"><path d="M15.5 14.5 L15.5 41.7 L42.6 41.7"/><path d="M21.6 35.4 L40 17.9"/><path d="M26 17.9 L40 17.9 L40 32"/></g></svg>
<div class="t" style="left:1759.0px;top:1800.3px;font-size:30px;color:#a2a4b2;-webkit-text-stroke:0.45px #a2a4b2;letter-spacing:-0.28px;">57152</div>
<div class="t" style="left:2038.0px;top:1800.3px;font-size:30px;color:#a2a4b2;-webkit-text-stroke:0.45px #a2a4b2;letter-spacing:0.43px;">20/11/2024 07:55:44</div>
<div class="t" style="left:2387.9px;top:1800.3px;font-size:30px;color:#a2a4b2;-webkit-text-stroke:0.45px #a2a4b2;letter-spacing:-0.43px;">-182.37 Kb</div>
<div class="t" style="left:2588.5px;top:1800.3px;font-size:30px;color:#a2a4b2;-webkit-text-stroke:0.45px #a2a4b2;letter-spacing:-0.10px;">red-adqmc-adqm-2.ru-central1.internal</div>
<div class="a" style="left:3116.2px;top:1788.2px;width:55.5px;height:55.4px;border-radius:15px;border:3px solid #353c46;box-sizing:border-box;"></div>
<svg class="a" style="left:3116.2px;top:1787.9px" width="56" height="56" viewBox="0 0 56 56"><g fill="none" stroke="#a0a2b0" stroke-width="2.6"><path d="M29.5 21.6 L20.6 21.6 L20.6 37.6 L36.5 37.6 L36.5 29.2"/><path d="M27.8 30.3 L38.8 19.3"/><path d="M31 18.8 L39.2 18.8 L39.2 27"/></g></svg>
<div class="t" style="left:560.5px;top:1882.2px;font-size:30px;color:#14a0fa;-webkit-text-stroke:0.45px #14a0fa;letter-spacing:-1.01px;">table_1_1</div>
<div class="a" style="left:878.2px;top:1870.1px;width:55.5px;height:55.4px;border-radius:15px;border:3px solid #2b2f35;box-sizing:border-box;"></div>
<svg class="a" style="left:878.2px;top:1877.8px" width="56" height="40" viewBox="0 0 56 40"><g fill="none" stroke="#6a6c76" stroke-width="3"><path d="M15.5 13.2 L23.3 19.5 L15.5 25.8"/><path d="M25 26.5 L40.5 26.5"/></g></svg>
<div class="t" style="left:985.3px;top:1882.2px;font-size:30px;color:#a2a4b2;-webkit-text-stroke:0.45px #a2a4b2;letter-spacing:-0.25px;">24.34 Mb</div>
<div class="a" style="left:1135.2px;top:1870.1px;width:55.5px;height:55.4px;background:#2a2a2d;border-radius:15px;border:4px solid #ff0a8e;box-sizing:border-box;"></div>
<svg class="a" style="left:1135.2px;top:1869.8px" width="56" height="56" viewBox="0 0 56 56"><g fill="none" stroke="#ffffff" stroke-width="3"><path d="M15.5 14.5 L15.5 41.7 L42.6 41.7"/><path d="M21.6 35.4 L40 17.9"/><path d="M26 17.9 L40 17.9 L40 32"/></g></svg>
<div class="t" style="left:1242.6px;top:1882.2px;font-size:30px;color:#a2a4b2;-webkit-text-stroke:0.45px #a2a4b2;letter-spacing:-0.63px;">database_1</div>
<div class="t" style="left:1532.0px;top:1882.2px;font-size:30px;color:#a2a4b2;-webkit-text-stroke:0.45px #a2a4b2;letter-spacing:-0.45px;">159670</div>
<div class="a" style="left:1652.5px;top:1870.1px;width:55.5px;height:55.4px;border-radius:15px;border:3px solid #2b2f35;box-sizing:border-box;"></div>
<svg class="a" style="left:1652.5px;top:1869.8px" width="56" height="56" viewBox="0 0 56 56"><g fill="none" stroke="#5f616a" stroke-width="3"><path d="M15.5 14.5 L15.5 41.7 L42.6 41.7"/><path d="M21.6 35.4 L40 17.9"/><path d="M26 17.9 L40 17.9 L40 32"/></g></svg>
<div class="t" style="left:1759.0px;top:1882.2px;font-size:30px;color:#a2a4b2;-webkit-text-stroke:0.45px #a2a4b2;letter-spacing:-0.28px;">57171</div>
<div class="t" style="left:2038.0px;top:1882.2px;font-size:30px;color:#a2a4b2;-webkit-text-stroke:0.45px #a2a4b2;letter-spacing:0.43px;">20/11/2024 07:55:44</div>
<div class="t" style="left:2387.9px;top:1882.2px;font-size:30px;color:#a2a4b2;-webkit-text-stroke:0.45px #a2a4b2;letter-spacing:-0.44px;">427.19 Kb</div>
<div class="t" style="left:2588.5px;top:1882.2px;font-size:30px;color:#a2a4b2;-webkit-text-stroke:0.45px #a2a4b2;letter-spacing:-0.10px;">red-adqmc-adqm-1.ru-central1.internal</div>
<div class="a" style="left:3116.2px;top:1870.1px;width:55.5px;height:55.4px;border-radius:15px;border:3px solid #353c46;box-sizing:border-box;"></div>
<svg class="a" style="left:3116.2px;top:1869.8px" width="56" height="56" viewBox="0 0 56 56"><g fill="none" stroke="#a0a2b0" stroke-width="2.6"><path d="M29.5 21.6 L20.6 21.6 L20.6 37.6 L36.5 37.6 L36.5 29.2"/><path d="M27.8 30.3 L38.8 19.3"/><path d="M31 18.8 L39.2 18.8 L39.2 27"/></g></svg>
<div class="t" style="left:560.5px;top:1964.1px;font-size:30px;color:#14a0fa;-webkit-text-stroke:0.45px #14a0fa;letter-spacing:-1.01px;">table_1_2</div>
<div class="a" style="left:878.2px;top:1952.0px;width:55.5px;height:55.4px;border-radius:15px;border:3px solid #2b2f35;box-sizing:border-box;"></div>
<svg class="a" style="left:878.2px;top:1959.7px" width="56" height="40" viewBox="0 0 56 40"><g fill="none" stroke="#6a6c76" stroke-width="3"><path d="M15.5 13.2 L23.3 19.5 L15.5 25.8"/><path d="M25 26.5 L40.5 26.5"/></g></svg>
<div class="t" style="left:985.3px;top:1964.1px;font-size:30px;color:#a2a4b2;-webkit-text-stroke:0.45px #a2a4b2;letter-spacing:-0.25px;">94.10 Mb</div>
<div class="a" style="left:1135.2px;top:1952.0px;width:55.5px;height:55.4px;border-radius:15px;border:3px solid #2b2f35;box-sizing:border-box;"></div>
<svg class="a" style="left:1135.2px;top:1951.7px" width="56" height="56" viewBox="0 0 56 56"><g fill="none" stroke="#5f616a" stroke-width="3"><path d="M15.5 14.5 L15.5 41.7 L42.6 41.7"/><path d="M21.6 35.4 L40 17.9"/><path d="M26 17.9 L40 17.9 L40 32"/></g></svg>
<div class="t" style="left:1242.6px;top:1964.1px;font-size:30px;color:#a2a4b2;-webkit-text-stroke:0.45px #a2a4b2;letter-spacing:-0.63px;">database_1</div>
<div class="t" style="left:1532.0px;top:1964.1px;font-size:30px;color:#a2a4b2;-webkit-text-stroke:0.45px #a2a4b2;letter-spacing:-0.45px;">303852</div>
<div class="a" style="left:1652.5px;top:1952.0px;width:55.5px;height:55.4px;border-radius:15px;border:3px solid #2b2f35;box-sizing:border-box;"></div>
<svg class="a" style="left:1652.5px;top:1951.7px" width="56" height="56" viewBox="0 0 56 56"><g fill="none" stroke="#5f616a" stroke-width="3"><path d="M15.5 14.5 L15.5 41.7 L42.6 41.7"/><path d="M21.6 35.4 L40 17.9"/><path d="M26 17.9 L40 17.9 L40 32"/></g></svg>
<div class="t" style="left:1759.0px;top:1964.1px;font-size:30px;color:#a2a4b2;-webkit-text-stroke:0.45px #a2a4b2;letter-spacing:-0.28px;">20593</div>
<div class="t" style="left:2038.0px;top:1964.1px;font-size:30px;color:#a2a4b2;-webkit-text-stroke:0.45px #a2a4b2;letter-spacing:0.43px;">20/11/2024 07:55:45</div>
<div class="t" style="left:2387.9px;top:1964.1px;font-size:30px;color:#a2a4b2;-webkit-text-stroke:0.45px #a2a4b2;letter-spacing:-0.45px;">2.68 Mb</div>
<div class="t" style="left:2588.5px;top:1964.1px;font-size:30px;color:#a2a4b2;-webkit-text-stroke:0.45px #a2a4b2;letter-spacing:-0.10px;">red-adqmc-adqm-4.ru-central1.internal</div>
<div class="a" style="left:3116.2px;top:1952.0px;width:55.5px;height:55.4px;border-radius:15px;border:3px solid #353c46;box-sizing:border-box;"></div>
<svg class="a" style="left:3116.2px;top:1951.7px" width="56" height="56" viewBox="0 0 56 56"><g fill="none" stroke="#a0a2b0" stroke-width="2.6"><path d="M29.5 21.6 L20.6 21.6 L20.6 37.6 L36.5 37.6 L36.5 29.2"/><path d="M27.8 30.3 L38.8 19.3"/><path d="M31 18.8 L39.2 18.8 L39.2 27"/></g></svg>
<div class="t" style="left:560.5px;top:2046.0px;font-size:30px;color:#14a0fa;-webkit-text-stroke:0.45px #14a0fa;letter-spacing:-1.01px;">table_1_2</div>
<div class="a" style="left:878.2px;top:2033.9px;width:55.5px;height:55.4px;border-radius:15px;border:3px solid #2b2f35;box-sizing:border-box;"></div>
<svg class="a" style="left:878.2px;top:2041.6px" width="56" height="40" viewBox="0 0 56 40"><g fill="none" stroke="#6a6c76" stroke-width="3"><path d="M15.5 13.2 L23.3 19.5 L15.5 25.8"/><path d="M25 26.5 L40.5 26.5"/></g></svg>
<div class="t" style="left:985.3px;top:2046.0px;font-size:30px;color:#a2a4b2;-webkit-text-stroke:0.45px #a2a4b2;letter-spacing:-0.25px;">93.84 Mb</div>
<div class="a" style="left:1135.2px;top:2033.9px;width:55.5px;height:55.4px;border-radius:15px;border:3px solid #2b2f35;box-sizing:border-box;"></div>
<svg class="a" style="left:1135.2px;top:2033.6px" width="56" height="56" viewBox="0 0 56 56"><g fill="none" stroke="#5f616a" stroke-width="3"><path d="M15.5 14.5 L15.5 41.7 L42.6 41.7"/><path d="M21.6 35.4 L40 17.9"/><path d="M26 17.9 L40 17.9 L40 32"/></g></svg>
<div class="t" style="left:1242.6px;top:2046.0px;font-size:30px;color:#a2a4b2;-webkit-text-stroke:0.45px #a2a4b2;letter-spacing:-0.63px;">database_1</div>
<div class="t" style="left:1532.0px;top:2046.0px;font-size:30px;color:#a2a4b2;-webkit-text-stroke:0.45px #a2a4b2;letter-spacing:-0.45px;">302591</div>
<div class="a" style="left:1652.5px;top:2033.9px;width:55.5px;height:55.4px;border-radius:15px;border:3px solid #2b2f35;box-sizing:border-box;"></div>
<svg class="a" style="left:1652.5px;top:2033.6px" width="56" height="56" viewBox="0 0 56 56"><g fill="none" stroke="#5f616a" stroke-width="3"><path d="M15.5 14.5 L15.5 41.7 L42.6 41.7"/><path d="M21.6 35.4 L40 17.9"/><path d="M26 17.9 L40 17.9 L40 32"/></g></svg>
<div class="t" style="left:1759.0px;top:2046.0px;font-size:30px;color:#a2a4b2;-webkit-text-stroke:0.45px #a2a4b2;letter-spacing:-0.28px;">20577</div>
<div class="t" style="left:2038.0px;top:2046.0px;font-size:30px;color:#a2a4b2;-webkit-text-stroke:0.45px #a2a4b2;letter-spacing:0.43px;">20/11/2024 07:55:45</div>
<div class="t" style="left:2387.9px;top:2046.0px;font-size:30px;color:#a2a4b2;-webkit-text-stroke:0.45px #a2a4b2;letter-spacing:-0.45px;">2.83 Mb</div>
<div class="t" style="left:2588.5px;top:2046.0px;font-size:30px;color:#a2a4b2;-webkit-text-stroke:0.45px #a2a4b2;letter-spacing:-0.10px;">red-adqmc-adqm-3.ru-central1.internal</div>
<div class="a" style="left:3116.2px;top:2033.9px;width:55.5px;height:55.4px;border-radius:15px;border:3px solid #353c46;box-sizing:border-box;"></div>
<svg class="a" style="left:3116.2px;top:2033.6px" width="56" height="56" viewBox="0 0 56 56"><g fill="none" stroke="#a0a2b0" stroke-width="2.6"><path d="M29.5 21.6 L20.6 21.6 L20.6 37.6 L36.5 37.6 L36.5 29.2"/><path d="M27.8 30.3 L38.8 19.3"/><path d="M31 18.8 L39.2 18.8 L39.2 27"/></g></svg>
<div class="t" style="left:560.5px;top:2127.9px;font-size:30px;color:#14a0fa;-webkit-text-stroke:0.45px #14a0fa;letter-spacing:-1.01px;">table_1_2</div>
<div class="a" style="left:878.2px;top:2115.8px;width:55.5px;height:55.4px;border-radius:15px;border:3px solid #2b2f35;box-sizing:border-box;"></div>
<svg class="a" style="left:878.2px;top:2123.5px" width="56" height="40" viewBox="0 0 56 40"><g fill="none" stroke="#6a6c76" stroke-width="3"><path d="M15.5 13.2 L23.3 19.5 L15.5 25.8"/><path d="M25 26.5 L40.5 26.5"/></g></svg>
<div class="t" style="left:985.3px;top:2127.9px;font-size:30px;color:#a2a4b2;-webkit-text-stroke:0.45px #a2a4b2;letter-spacing:-0.25px;">94.18 Mb</div>
<div class="a" style="left:1135.2px;top:2115.8px;width:55.5px;height:55.4px;border-radius:15px;border:3px solid #2b2f35;box-sizing:border-box;"></div>
<svg class="a" style="left:1135.2px;top:2115.5px" width="56" height="56" viewBox="0 0 56 56"><g fill="none" stroke="#5f616a" stroke-width="3"><path d="M15.5 14.5 L15.5 41.7 L42.6 41.7"/><path d="M21.6 35.4 L40 17.9"/><path d="M26 17.9 L40 17.9 L40 32"/></g></svg>
<div class="t" style="left:1242.6px;top:2127.9px;font-size:30px;color:#a2a4b2;-webkit-text-stroke:0.45px #a2a4b2;letter-spacing:-0.63px;">database_1</div>
<div class="t" style="left:1532.0px;top:2127.9px;font-size:30px;color:#a2a4b2;-webkit-text-stroke:0.45px #a2a4b2;letter-spacing:-0.45px;">303715</div>
<div class="a" style="left:1652.5px;top:2115.8px;width:55.5px;height:55.4px;border-radius:15px;border:3px solid #2b2f35;box-sizing:border-box;"></div>
<svg class="a" style="left:1652.5px;top:2115.5px" width="56" height="56" viewBox="0 0 56 56"><g fill="none" stroke="#5f616a" stroke-width="3"><path d="M15.5 14.5 L15.5 41.7 L42.6 41.7"/><path d="M21.6 35.4 L40 17.9"/><path d="M26 17.9 L40 17.9 L40 32"/></g></svg>
<div class="t" style="left:1759.0px;top:2127.9px;font-size:30px;color:#a2a4b2;-webkit-text-stroke:0.45px #a2a4b2;letter-spacing:-0.28px;">20594</div>
<div class="t" style="left:2038.0px;top:2127.9px;font-size:30px;color:#a2a4b2;-webkit-text-stroke:0.45px #a2a4b2;letter-spacing:0.43px;">20/11/2024 07:55:44</div>
<div class="t" style="left:2387.9px;top:2127.9px;font-size:30px;color:#a2a4b2;-webkit-text-stroke:0.45px #a2a4b2;letter-spacing:-0.45px;">2.81 Mb</div>
<div class="t" style="left:2588.5px;top:2127.9px;font-size:30px;color:#a2a4b2;-webkit-text-stroke:0.45px #a2a4b2;letter-spacing:-0.10px;">red-adqmc-adqm-2.ru-central1.internal</div>
<div class="a" style="left:3116.2px;top:2115.8px;width:55.5px;height:55.4px;border-radius:15px;border:3px solid #353c46;box-sizing:border-box;"></div>
<svg class="a" style="left:3116.2px;top:2115.5px" width="56" height="56" viewBox="0 0 56 56"><g fill="none" stroke="#a0a2b0" stroke-width="2.6"><path d="M29.5 21.6 L20.6 21.6 L20.6 37.6 L36.5 37.6 L36.5 29.2"/><path d="M27.8 30.3 L38.8 19.3"/><path d="M31 18.8 L39.2 18.8 L39.2 27"/></g></svg>
<div class="t" style="left:560.5px;top:2209.8px;font-size:30px;color:#14a0fa;-webkit-text-stroke:0.45px #14a0fa;letter-spacing:-1.01px;">table_1_2</div>
<div class="a" style="left:878.2px;top:2197.7px;width:55.5px;height:55.4px;border-radius:15px;border:3px solid #2b2f35;box-sizing:border-box;"></div>
<svg class="a" style="left:878.2px;top:2205.4px" width="56" height="40" viewBox="0 0 56 40"><g fill="none" stroke="#6a6c76" stroke-width="3"><path d="M15.5 13.2 L23.3 19.5 L15.5 25.8"/><path d="M25 26.5 L40.5 26.5"/></g></svg>
<div class="t" style="left:985.3px;top:2209.8px;font-size:30px;color:#a2a4b2;-webkit-text-stroke:0.45px #a2a4b2;letter-spacing:-0.25px;">94.20 Mb</div>
<div class="a" style="left:1135.2px;top:2197.7px;width:55.5px;height:55.4px;border-radius:15px;border:3px solid #2b2f35;box-sizing:border-box;"></div>
<svg class="a" style="left:1135.2px;top:2197.4px" width="56" height="56" viewBox="0 0 56 56"><g fill="none" stroke="#5f616a" stroke-width="3"><path d="M15.5 14.5 L15.5 41.7 L42.6 41.7"/><path d="M21.6 35.4 L40 17.9"/><path d="M26 17.9 L40 17.9 L40 32"/></g></svg>
<div class="t" style="left:1242.6px;top:2209.8px;font-size:30px;color:#a2a4b2;-webkit-text-stroke:0.45px #a2a4b2;letter-spacing:-0.63px;">database_1</div>
<div class="t" style="left:1532.0px;top:2209.8px;font-size:30px;color:#a2a4b2;-webkit-text-stroke:0.45px #a2a4b2;letter-spacing:-0.45px;">304022</div>
<div class="a" style="left:1652.5px;top:2197.7px;width:55.5px;height:55.4px;border-radius:15px;border:3px solid #2b2f35;box-sizing:border-box;"></div>
<svg class="a" style="left:1652.5px;top:2197.4px" width="56" height="56" viewBox="0 0 56 56"><g fill="none" stroke="#5f616a" stroke-width="3"><path d="M15.5 14.5 L15.5 41.7 L42.6 41.7"/><path d="M21.6 35.4 L40 17.9"/><path d="M26 17.9 L40 17.9 L40 32"/></g></svg>
<div class="t" style="left:1759.0px;top:2209.8px;font-size:30px;color:#a2a4b2;-webkit-text-stroke:0.45px #a2a4b2;letter-spacing:-0.28px;">20571</div>
<div class="t" style="left:2038.0px;top:2209.8px;font-size:30px;color:#a2a4b2;-webkit-text-stroke:0.45px #a2a4b2;letter-spacing:0.43px;">20/11/2024 07:55:44</div>
<div class="t" style="left:2387.9px;top:2209.8px;font-size:30px;color:#a2a4b2;-webkit-text-stroke:0.45px #a2a4b2;letter-spacing:-0.45px;">3.15 Mb</div>
<div class="t" style="left:2588.5px;top:2209.8px;font-size:30px;color:#a2a4b2;-webkit-text-stroke:0.45px #a2a4b2;letter-spacing:-0.10px;">red-adqmc-adqm-1.ru-central1.internal</div>
<div class="a" style="left:3116.2px;top:2197.7px;width:55.5px;height:55.4px;border-radius:15px;border:3px solid #353c46;box-sizing:border-box;"></div>
<svg class="a" style="left:3116.2px;top:2197.4px" width="56" height="56" viewBox="0 0 56 56"><g fill="none" stroke="#a0a2b0" stroke-width="2.6"><path d="M29.5 21.6 L20.6 21.6 L20.6 37.6 L36.5 37.6 L36.5 29.2"/><path d="M27.8 30.3 L38.8 19.3"/><path d="M31 18.8 L39.2 18.8 L39.2 27"/></g></svg>
<div class="t" style="left:560.5px;top:2291.7px;font-size:30px;color:#14a0fa;-webkit-text-stroke:0.45px #14a0fa;letter-spacing:-1.01px;">table_1_3</div>
<div class="a" style="left:878.2px;top:2279.6px;width:55.5px;height:55.4px;border-radius:15px;border:3px solid #2b2f35;box-sizing:border-box;"></div>
<svg class="a" style="left:878.2px;top:2287.3px" width="56" height="40" viewBox="0 0 56 40"><g fill="none" stroke="#6a6c76" stroke-width="3"><path d="M15.5 13.2 L23.3 19.5 L15.5 25.8"/><path d="M25 26.5 L40.5 26.5"/></g></svg>
<div class="t" style="left:985.3px;top:2291.7px;font-size:30px;color:#a2a4b2;-webkit-text-stroke:0.45px #a2a4b2;letter-spacing:-0.24px;">600.54 Kb</div>
<div class="a" style="left:1135.2px;top:2279.6px;width:55.5px;height:55.4px;border-radius:15px;border:3px solid #2b2f35;box-sizing:border-box;"></div>
<svg class="a" style="left:1135.2px;top:2279.3px" width="56" height="56" viewBox="0 0 56 56"><g fill="none" stroke="#5f616a" stroke-width="3"><path d="M15.5 14.5 L15.5 41.7 L42.6 41.7"/><path d="M21.6 35.4 L40 17.9"/><path d="M26 17.9 L40 17.9 L40 32"/></g></svg>
<div class="t" style="left:1242.6px;top:2291.7px;font-size:30px;color:#a2a4b2;-webkit-text-stroke:0.45px #a2a4b2;letter-spacing:-0.63px;">database_1</div>
<div class="t" style="left:1532.0px;top:2291.7px;font-size:30px;color:#a2a4b2;-webkit-text-stroke:0.45px #a2a4b2;letter-spacing:-0.45px;">86700</div>
<div class="a" style="left:1652.5px;top:2279.6px;width:55.5px;height:55.4px;border-radius:15px;border:3px solid #2b2f35;box-sizing:border-box;"></div>
<svg class="a" style="left:1652.5px;top:2279.3px" width="56" height="56" viewBox="0 0 56 56"><g fill="none" stroke="#5f616a" stroke-width="3"><path d="M15.5 14.5 L15.5 41.7 L42.6 41.7"/><path d="M21.6 35.4 L40 17.9"/><path d="M26 17.9 L40 17.9 L40 32"/></g></svg>
<div class="t" style="left:1759.0px;top:2291.7px;font-size:30px;color:#a2a4b2;-webkit-text-stroke:0.45px #a2a4b2;letter-spacing:-0.28px;">20395</div>
<div class="t" style="left:2038.0px;top:2291.7px;font-size:30px;color:#a2a4b2;-webkit-text-stroke:0.45px #a2a4b2;letter-spacing:0.43px;">20/11/2024 07:55:45</div>
<div class="t" style="left:2387.9px;top:2291.7px;font-size:30px;color:#a2a4b2;-webkit-text-stroke:0.45px #a2a4b2;letter-spacing:-0.44px;">74.12 Kb</div>
<div class="t" style="left:2588.5px;top:2291.7px;font-size:30px;color:#a2a4b2;-webkit-text-stroke:0.45px #a2a4b2;letter-spacing:-0.10px;">red-adqmc-adqm-4.ru-central1.internal</div>
<div class="a" style="left:3116.2px;top:2279.6px;width:55.5px;height:55.4px;border-radius:15px;border:3px solid #353c46;box-sizing:border-box;"></div>
<svg class="a" style="left:3116.2px;top:2279.3px" width="56" height="56" viewBox="0 0 56 56"><g fill="none" stroke="#a0a2b0" stroke-width="2.6"><path d="M29.5 21.6 L20.6 21.6 L20.6 37.6 L36.5 37.6 L36.5 29.2"/><path d="M27.8 30.3 L38.8 19.3"/><path d="M31 18.8 L39.2 18.8 L39.2 27"/></g></svg>
<div class="t" style="left:560.5px;top:2373.6px;font-size:30px;color:#14a0fa;-webkit-text-stroke:0.45px #14a0fa;letter-spacing:-1.01px;">table_1_3</div>
<div class="a" style="left:878.2px;top:2361.5px;width:55.5px;height:55.4px;border-radius:15px;border:3px solid #2b2f35;box-sizing:border-box;"></div>
<svg class="a" style="left:878.2px;top:2369.2px" width="56" height="40" viewBox="0 0 56 40"><g fill="none" stroke="#6a6c76" stroke-width="3"><path d="M15.5 13.2 L23.3 19.5 L15.5 25.8"/><path d="M25 26.5 L40.5 26.5"/></g></svg>
<div class="t" style="left:985.3px;top:2373.6px;font-size:30px;color:#a2a4b2;-webkit-text-stroke:0.45px #a2a4b2;letter-spacing:-0.24px;">584.52 Kb</div>
<div class="a" style="left:1135.2px;top:2361.5px;width:55.5px;height:55.4px;border-radius:15px;border:3px solid #2b2f35;box-sizing:border-box;"></div>
<svg class="a" style="left:1135.2px;top:2361.2px" width="56" height="56" viewBox="0 0 56 56"><g fill="none" stroke="#5f616a" stroke-width="3"><path d="M15.5 14.5 L15.5 41.7 L42.6 41.7"/><path d="M21.6 35.4 L40 17.9"/><path d="M26 17.9 L40 17.9 L40 32"/></g></svg>
<div class="t" style="left:1242.6px;top:2373.6px;font-size:30px;color:#a2a4b2;-webkit-text-stroke:0.45px #a2a4b2;letter-spacing:-0.63px;">database_1</div>
<div class="t" style="left:1532.0px;top:2373.6px;font-size:30px;color:#a2a4b2;-webkit-text-stroke:0.45px #a2a4b2;letter-spacing:-0.45px;">86798</div>
<div class="a" style="left:1652.5px;top:2361.5px;width:55.5px;height:55.4px;border-radius:15px;border:3px solid #2b2f35;box-sizing:border-box;"></div>
<svg class="a" style="left:1652.5px;top:2361.2px" width="56" height="56" viewBox="0 0 56 56"><g fill="none" stroke="#5f616a" stroke-width="3"><path d="M15.5 14.5 L15.5 41.7 L42.6 41.7"/><path d="M21.6 35.4 L40 17.9"/><path d="M26 17.9 L40 17.9 L40 32"/></g></svg>
<div class="t" style="left:1759.0px;top:2373.6px;font-size:30px;color:#a2a4b2;-webkit-text-stroke:0.45px #a2a4b2;letter-spacing:-0.28px;">20339</div>
<div class="t" style="left:2038.0px;top:2373.6px;font-size:30px;color:#a2a4b2;-webkit-text-stroke:0.45px #a2a4b2;letter-spacing:0.43px;">20/11/2024 07:55:45</div>
<div class="t" style="left:2387.9px;top:2373.6px;font-size:30px;color:#a2a4b2;-webkit-text-stroke:0.45px #a2a4b2;letter-spacing:-0.44px;">66.42 Kb</div>
<div class="t" style="left:2588.5px;top:2373.6px;font-size:30px;color:#a2a4b2;-webkit-text-stroke:0.45px #a2a4b2;letter-spacing:-0.10px;">red-adqmc-adqm-3.ru-central1.internal</div>
<div class="a" style="left:3116.2px;top:2361.5px;width:55.5px;height:55.4px;border-radius:15px;border:3px solid #353c46;box-sizing:border-box;"></div>
<svg class="a" style="left:3116.2px;top:2361.2px" width="56" height="56" viewBox="0 0 56 56"><g fill="none" stroke="#a0a2b0" stroke-width="2.6"><path d="M29.5 21.6 L20.6 21.6 L20.6 37.6 L36.5 37.6 L36.5 29.2"/><path d="M27.8 30.3 L38.8 19.3"/><path d="M31 18.8 L39.2 18.8 L39.2 27"/></g></svg>
<div class="t" style="left:2194.0px;top:2482.5px;font-size:30px;color:#a2a4b2;-webkit-text-stroke:0.45px #a2a4b2;letter-spacing:-0.59px;">Page</div>
<div class="a" style="left:2286.5px;top:2470.3px;width:141.2px;height:54.8px;border-radius:13px;border:3px solid #3a4048;box-sizing:border-box;"></div>
<div class="t" style="left:2348.7px;top:2482.5px;font-size:30px;color:#e4e4ea;-webkit-text-stroke:0.45px #e4e4ea;">1</div>
<div class="t" style="left:2444.9px;top:2482.5px;font-size:30px;color:#a2a4b2;-webkit-text-stroke:0.45px #a2a4b2;letter-spacing:-0.03px;">of 6</div>
<div class="a" style="left:2536.6px;top:2470.3px;width:55.0px;height:54.8px;border-radius:14px;border:3px solid #323338;box-sizing:border-box;"></div>
<svg class="a" style="left:2550.0px;top:2482.4px" width="21.3" height="30.6" viewBox="0 0 21.3 30.6"><path d="M15.30 6.00 L6.00 15.30 L15.30 24.60" fill="none" stroke="#9a9ba8" stroke-width="3.7" stroke-linecap="butt" stroke-linejoin="miter"/></svg>
<svg class="a" style="left:2560.5px;top:2482.4px" width="21.3" height="30.6" viewBox="0 0 21.3 30.6"><path d="M15.30 6.00 L6.00 15.30 L15.30 24.60" fill="none" stroke="#9a9ba8" stroke-width="3.7" stroke-linecap="butt" stroke-linejoin="miter"/></svg>
<div class="a" style="left:2608.6px;top:2470.3px;width:55.0px;height:54.8px;border-radius:14px;border:3px solid #323338;box-sizing:border-box;"></div>
<svg class="a" style="left:2624.0px;top:2480.4px" width="23.3" height="34.6" viewBox="0 0 23.3 34.6"><path d="M17.30 6.00 L6.00 17.30 L17.30 28.60" fill="none" stroke="#9a9ba8" stroke-width="3.8" stroke-linecap="butt" stroke-linejoin="miter"/></svg>
<div class="a" style="left:2680.5px;top:2470.3px;width:55.0px;height:54.8px;border-radius:14px;border:3px solid #323338;box-sizing:border-box;"></div>
<svg class="a" style="left:2696.2px;top:2480.4px" width="23.3" height="34.6" viewBox="0 0 23.3 34.6"><path d="M6.00 6.00 L17.30 17.30 L6.00 28.60" fill="none" stroke="#d6d6da" stroke-width="3.8" stroke-linecap="butt" stroke-linejoin="miter"/></svg>
<div class="a" style="left:2752.4px;top:2470.3px;width:55.0px;height:54.8px;border-radius:14px;border:3px solid #323338;box-sizing:border-box;"></div>
<svg class="a" style="left:2761.7px;top:2482.4px" width="21.3" height="30.6" viewBox="0 0 21.3 30.6"><path d="M6.00 6.00 L15.30 15.30 L6.00 24.60" fill="none" stroke="#d6d6da" stroke-width="3.7" stroke-linecap="butt" stroke-linejoin="miter"/></svg>
<svg class="a" style="left:2772.7px;top:2482.4px" width="21.3" height="30.6" viewBox="0 0 21.3 30.6"><path d="M6.00 6.00 L15.30 15.30 L6.00 24.60" fill="none" stroke="#d6d6da" stroke-width="3.7" stroke-linecap="butt" stroke-linejoin="miter"/></svg>
<div class="t" style="left:2848.6px;top:2482.5px;font-size:30px;color:#a2a4b2;-webkit-text-stroke:0.45px #a2a4b2;letter-spacing:-0.69px;">Show</div>
<div class="a" style="left:2946.2px;top:2470.3px;width:249.3px;height:54.8px;border-radius:13px;border:3px solid #3a4048;box-sizing:border-box;"></div>
<div class="t" style="left:2961.2px;top:2482.5px;font-size:30px;color:#e4e4ea;-webkit-text-stroke:0.45px #e4e4ea;letter-spacing:-0.38px;">10 per page</div>
<svg class="a" style="left:3160.0px;top:2481.7px" width="22" height="32" viewBox="0 0 22 32"><path d="M6.00 6.00 L16.00 16.00 L6.00 26.00" fill="none" stroke="#a0a2b0" stroke-width="3.8" stroke-linecap="butt" stroke-linejoin="miter"/></svg>
</body></html>
